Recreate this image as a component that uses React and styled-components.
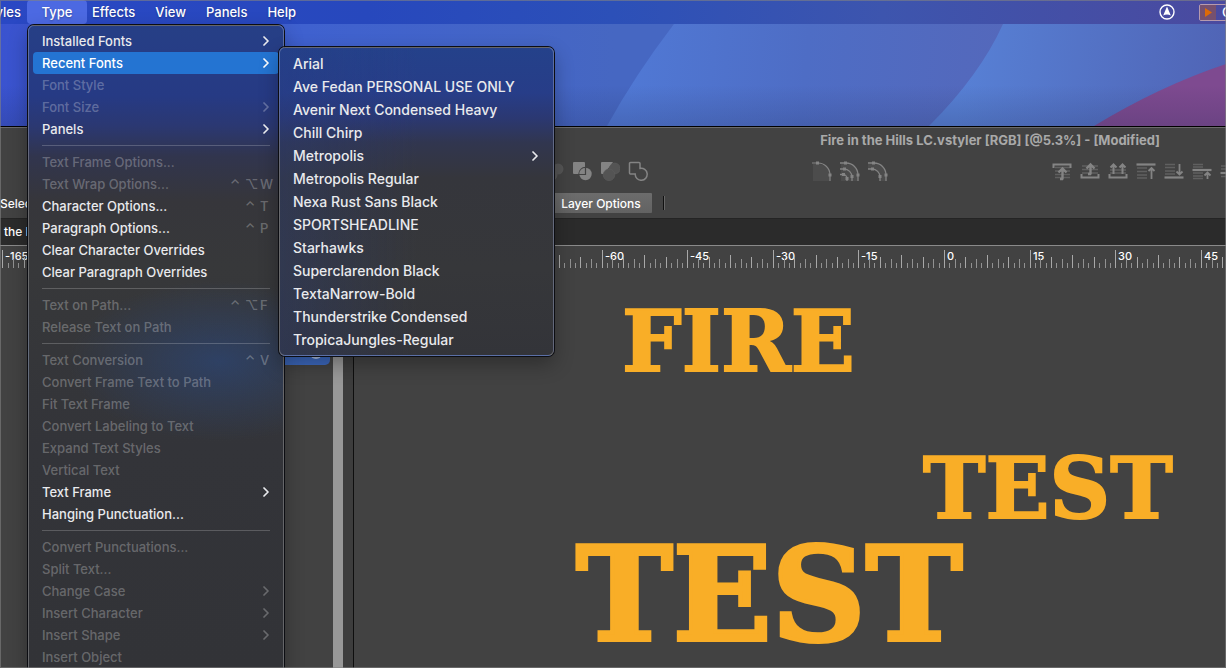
import React from 'react'
import styled, { createGlobalStyle, css } from 'styled-components'

const GlobalStyle = createGlobalStyle`
    * {
        box-sizing: border-box;
    }
    body {
        margin: 0;
        background: #424242;
        font-family: Inter, "Liberation Sans", sans-serif;
        font-size: 13px;
        font-weight: 500;
        color: #fff;
    }
    button {
        font: inherit;
        color: inherit;
        border: 0;
        background: none;
        padding: 0;
        margin: 0;
    }
`

const Page = styled.div`
    position: relative;
    display: flex;
    flex-direction: column;
    min-height: 100vh;
    overflow: hidden;
    &::after {
        content: '';
        position: absolute;
        inset: 0;
        border: 1px solid rgba(130, 130, 130, 0.6);
        pointer-events: none;
        z-index: 10;
    }
`

/* system menu bar */

const MenuBar = styled.nav`
    position: relative;
    z-index: 5;
    display: flex;
    align-items: stretch;
    height: 24px;
    background: linear-gradient(90deg, #2a48c4 0%, #2748bd 30%, #2c50b8 50%, #3d55ae 72%, #4a4a9f 100%);
`

const BarSlot = styled.div`
    position: relative;
    display: flex;
    justify-content: flex-end;
    ${p => p.$cut && css`
        width: 27px;
    `}
`

const BarButton = styled.button`
    padding: 0 10px;
    border-radius: 4px;
    line-height: 22px;
    white-space: nowrap;
    text-shadow: 0 1px 2px rgba(0, 0, 0, 0.3);
    ${p => p.$active && css`
        width: 60px;
        background: #4c69e2;
    `}
    ${p => p.$tight && css`
        padding-left: 5px;
        padding-right: ${p.$cut ? 6 : 10}px;
    `}
`

const StatusArea = styled.div`
    display: flex;
    align-items: center;
    gap: 24px;
    margin-left: auto;
    margin-right: -14px;
`

const RecorderDiv = styled.div`
    display: flex;
    align-items: center;
    gap: 6px;
    width: 41px;
    height: 17px;
    border: 1px solid #b69aae;
    border-radius: 2px;
    overflow: hidden;
    white-space: nowrap;
`

const RecorderPlay = styled.span`
    display: flex;
    align-items: center;
    justify-content: center;
    width: 16px;
    height: 15px;
    background: #75506f;
`

/* drop down menus */

const panel = css`
    position: absolute;
    margin: 0;
    padding: 4px;
    border: 1px solid rgba(255, 255, 255, 0.25);
    border-radius: 6px;
    box-shadow: 0 0 0 1px #0c0d12, 0 8px 20px rgba(0, 0, 0, 0.3);
    list-style: none;
`

const MenuUl = styled.ul`
    ${panel}
    top: 25px;
    left: 1px;
    width: 256px;
    background:
        radial-gradient(ellipse 150px 80px at 190px 335px, rgba(42, 72, 128, 0.6), rgba(42, 72, 128, 0) 100%),
        linear-gradient(180deg, #263f86 0, #263a84 70px, #2b3872 100px, #31354e 130px, #36363b 175px, #37383a 240px, #333439 420px, #323337 640px);
`

const SubMenuUl = styled.ul`
    ${panel}
    top: -5px;
    left: 100%;
    width: 275px;
    background:
        linear-gradient(90deg, rgba(38, 60, 130, 0.3), rgba(38, 60, 130, 0) 50%),
        linear-gradient(180deg, #24418a 0, #273d88 45px, #2b3872 70px, #31364f 95px, #35363c 130px, #36373a 220px, #333439 308px);
`

const ItemLi = styled.li`
    position: relative;
`

const ItemButton = styled.button`
    display: flex;
    align-items: center;
    width: 100%;
    height: ${p => (p.$large ? 23 : 22)}px;
    padding: 0 9px;
    border-radius: 4px;
    font-size: ${p => (p.$large ? 14 : 13)}px;
    text-align: left;
    white-space: nowrap;
    color: #e9eaed;
    &:disabled {
        color: rgba(255, 255, 255, 0.27);
    }
    ${p => p.$active && css`
        background: #2474d2;
        color: #fff;
    `}
`

const Chevron = styled.svg`
    margin-left: auto;
    margin-right: ${p => (p.$large ? 1 : 0)}px;
    fill: none;
    stroke: currentColor;
    stroke-width: 1.7;
    stroke-linecap: round;
    stroke-linejoin: round;
`

const KeysSpan = styled.span`
    display: flex;
    margin-left: auto;
    color: rgba(255, 255, 255, 0.27);
`

const KeySpan = styled.span`
    width: 15px;
    &:last-child {
        width: 10px;
    }
`

const Separator = styled.li`
    height: 11px;
    padding: 5px 9px;
    &::before {
        content: '';
        display: block;
        height: 1px;
        background: rgba(255, 255, 255, 0.2);
    }
`

/* wallpaper and application window */

const Wallpaper = styled.svg`
    display: block;
    width: 100%;
    height: 102px;
`

const AppWindow = styled.main`
    display: flex;
    flex-direction: column;
    flex: 1;
    border-top: 1px solid #000;
    background: #424242;
    box-shadow: inset 0 1px 0 #6b6b6b;
`

const TitleDiv = styled.h1`
    margin: 0;
    padding-right: 66px;
    height: 27px;
    font-size: 13px;
    font-weight: 700;
    line-height: 27px;
    text-align: right;
    color: #a9a9a9;
`

const ToolRow = styled.div`
    display: flex;
    align-items: center;
    height: 34px;
`

const IconGroup = styled.div`
    display: flex;
    gap: 8px;
    margin-left: ${p => p.$left || 0}px;
    ${p => p.$end && css`
        margin-left: auto;
        margin-right: -14px;
    `}
`

const ToolButton = styled.button`
    display: flex;
    width: 20px;
    height: 20px;
`

const OptionRow = styled.div`
    display: flex;
    align-items: center;
    height: 31px;
    border-bottom: 1px solid #242424;
`

const OptionLabel = styled.span`
    width: 550px;
    font-size: 12px;
`

const LayerButton = styled.button`
    width: 102px;
    height: 20px;
    border-radius: 1px;
    background: linear-gradient(180deg, #6c6c6c, #626262);
    font-size: 12px;
`

const Divider = styled.span`
    width: 2px;
    height: 14px;
    margin-left: 11px;
    border-left: 1px solid #111;
    border-right: 1px solid #666;
`

const TabStrip = styled.div`
    height: 27px;
    padding-left: 4px;
    border-bottom: 1px solid #8a8a8a;
    background: #2b2b2b;
    font-size: 12px;
    line-height: 25px;
`

const RulerSvg = styled.svg`
    display: block;
    width: 100%;
    height: 24px;
    font-size: 11px;
`

const Workspace = styled.div`
    display: flex;
    flex: 1;
`

const SidePanel = styled.aside`
    display: flex;
    width: 354px;
    border-right: 1px solid #0e0e0e;
`

const LayerList = styled.div`
    flex: 1;
    padding: 67px 3px 0 32px;
`

const LayerRow = styled.div`
    display: flex;
    justify-content: flex-end;
    align-items: center;
    height: 28px;
    padding-right: 8px;
    border-radius: 5px;
    background: #3c68bd;
`

const LayerDot = styled.span`
    width: 12px;
    height: 15px;
    border-radius: 8px;
    background: #a9bce0;
`

const ScrollTrack = styled.div`
    width: 20px;
    background: #3d3d3d;
`

const ScrollThumb = styled.div`
    width: 10px;
    height: 100%;
    background: #989898;
`

const Canvas = styled.section`
    position: relative;
    flex: 1;
`

const ArtText = styled.div`
    position: absolute;
    left: ${p => p.$x}px;
    top: ${p => p.$y}px;
    font-family: "DejaVu Serif", serif;
    font-size: ${p => p.$size}px;
    font-weight: 700;
    line-height: 1;
    color: #f9ae27;
    -webkit-text-stroke: ${p => (p.$size > 100 ? 4 : 2)}px #f9ae27;
`

const typeItems = [
    { label: 'Installed Fonts', arrow: true },
    { label: 'Recent Fonts', arrow: true, active: true },
    { label: 'Font Style', off: true },
    { label: 'Font Size', off: true, arrow: true },
    { label: 'Panels', arrow: true },
    null,
    { label: 'Text Frame Options...', off: true },
    { label: 'Text Wrap Options...', off: true, keys: '⌃⌥W' },
    { label: 'Character Options...', keys: '⌃T' },
    { label: 'Paragraph Options...', keys: '⌃P' },
    { label: 'Clear Character Overrides' },
    { label: 'Clear Paragraph Overrides' },
    null,
    { label: 'Text on Path...', off: true, keys: '⌃⌥F' },
    { label: 'Release Text on Path', off: true },
    null,
    { label: 'Text Conversion', off: true, keys: '⌃V' },
    { label: 'Convert Frame Text to Path', off: true },
    { label: 'Fit Text Frame', off: true },
    { label: 'Convert Labeling to Text', off: true },
    { label: 'Expand Text Styles', off: true },
    { label: 'Vertical Text', off: true },
    { label: 'Text Frame', arrow: true },
    { label: 'Hanging Punctuation...' },
    null,
    { label: 'Convert Punctuations...', off: true },
    { label: 'Split Text...', off: true },
    { label: 'Change Case', off: true, arrow: true },
    { label: 'Insert Character', off: true, arrow: true },
    { label: 'Insert Shape', off: true, arrow: true },
    { label: 'Insert Object', off: true },
]

const recentFonts = [
    { label: 'Arial' },
    { label: 'Ave Fedan PERSONAL USE ONLY' },
    { label: 'Avenir Next Condensed Heavy' },
    { label: 'Chill Chirp' },
    { label: 'Metropolis', arrow: true },
    { label: 'Metropolis Regular' },
    { label: 'Nexa Rust Sans Black' },
    { label: 'SPORTSHEADLINE' },
    { label: 'Starhawks' },
    { label: 'Superclarendon Black' },
    { label: 'TextaNarrow-Bold' },
    { label: 'Thunderstrike Condensed' },
    { label: 'TropicaJungles-Regular' },
]

const MenuItem = ({ item, large, children }) => (
    <ItemLi>
        <ItemButton $large={large} $active={item.active} disabled={item.off}>
            {item.label}
            {item.keys && <KeysSpan>
                {[...item.keys].map(k => <KeySpan key={k}>{k}</KeySpan>)}
            </KeysSpan>}
            {item.arrow && <Chevron $large={large} width='8' height='10' viewBox='0 0 8 10'>
                <path d='M2 1l4 4-4 4' />
            </Chevron>}
        </ItemButton>
        {children}
    </ItemLi>
)

const TypeMenu = () => (
    <MenuUl>
        {typeItems.map((item, i) => item
            ? <MenuItem key={i} item={item}>
                {item.active && <SubMenuUl>
                    {recentFonts.map(font => <MenuItem key={font.label} item={font} large />)}
                </SubMenuUl>}
            </MenuItem>
            : <Separator key={i} />)}
    </MenuUl>
)

const Icon = ({ label, children }) => (
    <ToolButton aria-label={label}>
        <svg width='20' height='20' viewBox='0 0 20 20' fill='none' stroke='#848484' strokeWidth='1.5'>
            {children}
        </svg>
    </ToolButton>
)

const ShapeIcons = () => (
    <IconGroup $left={544}>
        <Icon label='Exclude'>
            <g stroke='none' fill='#555'>
                <circle cx='14' cy='8' r='5.5' />
                <circle cx='8' cy='14' r='5.5' />
            </g>
        </Icon>
        <Icon label='Intersect'>
            <rect x='1' y='1' width='12' height='12' rx='1' fill='#848484' stroke='none' />
            <circle cx='13.5' cy='13' r='7.2' fill='#424242' stroke='none' />
            <circle cx='13.5' cy='13' r='6.2' fill='#848484' stroke='none' />
            <path d='M13.500 6v7.500H7' stroke='#424242' strokeWidth='1.2' />
        </Icon>
        <Icon label='Subtract'>
            <path d='M1 2a1 1 0 0 1 1-1h11L7 9l-4 4H2a1 1 0 0 1-1-1z' fill='#848484' stroke='none' />
            <g stroke='#5e5e5e' strokeWidth='.6' fill='#545454'>
                <circle cx='14.8' cy='7.5' r='5.4' />
                <circle cx='9' cy='13.8' r='5.8' />
            </g>
        </Icon>
        <Icon label='Unite'>
            <path d='M2.500 1.500h8.500a1 1 0 0 1 1 1v4.900a6 6 0 1 1-4.800 5.600H2.500a1 1 0 0 1-1-1v-9.500a1 1 0 0 1 1-1z' />
        </Icon>
    </IconGroup>
)

const CurveIcons = () => (
    <IconGroup $left={164}>
        <Icon label='Single curve'>
            <path d='M1 3h6a12 12 0 0 1 11 12v5H1z' fill='#4c4c4c' stroke='none' />
            <path d='M0 2h6a12 12 0 0 1 12 12v6' strokeWidth='1.2' />
            <path d='M4 .5h3v3H4zM16.500 12.500h3v3h-3z' fill='#848484' stroke='none' />
        </Icon>
        <Icon label='Triple curve'>
            <path d='M1 3h6a12 12 0 0 1 11 12v5H1z' fill='#4c4c4c' stroke='none' />
            <path d='M0 2h6a12 12 0 0 1 12 12v6M0 8h4a8 8 0 0 1 8 8v4M0 13.500h3a4 4 0 0 1 4 4V20' strokeWidth='1.3' />
            <path d='M4 .5h3v3H4zM16.500 12.500h3v3h-3zM3 6.500h3v3H3zM10.500 14h3v3h-3zM2 12h3v3H2zM5.500 16h3v3h-3z' fill='#848484' stroke='none' />
        </Icon>
        <Icon label='Double curve'>
            <path d='M0 8h4a8 8 0 0 1 8 8v4h6v-5A12 12 0 0 0 6 3H0z' fill='#4c4c4c' stroke='none' />
            <path d='M0 2h6a12 12 0 0 1 12 12v6M0 8h4a8 8 0 0 1 8 8v4' strokeWidth='1.3' />
            <path d='M4 .5h3v3H4zM16.500 12.500h3v3h-3zM3 6.500h3v3H3zM10.500 14h3v3h-3z' fill='#848484' stroke='none' />
        </Icon>
    </IconGroup>
)

const ArrangeIcons = () => (
    <IconGroup $end>
        <Icon label='Bring to front'>
            <path d='M3 6.500h15M3 10h15M3 13.500h15M3 16.500h15' stroke='#606060' />
            <path d='M1.500 7V3.500h17V7' strokeWidth='2' />
            <path d='M10.500 18.500V8M6.500 11.500l4-4 4 4M8 18h3' strokeWidth='2.400' />
        </Icon>
        <Icon label='Bring out'>
            <path d='M2 5h16M2 8.500h16M2 12h16' stroke='#606060' />
            <path d='M1.500 13v3.500h17V13' strokeWidth='2' />
            <path d='M10.500 13.500V4M6.500 7.500l4-4 4 4M8 13h3' strokeWidth='2.400' />
        </Icon>
        <Icon label='Bring all out'>
            <path d='M2 9h16M2 12h16' stroke='#606060' />
            <path d='M1.500 13v3.500h17V13' strokeWidth='2' />
            <path d='M5.500 13V4M2.500 6.500l3-3 3 3M14.500 13V4M11.500 6.500l3-3 3 3' strokeWidth='2' />
        </Icon>
        <Icon label='Move to top'>
            <path d='M1 7h10M1 10.500h10M1 14h10M1 17h10' stroke='#606060' />
            <path d='M.5 3.500h19' strokeWidth='2.200' />
            <path d='M15.500 18V7M12.500 10l3-3 3 3' strokeWidth='1.800' />
        </Icon>
        <Icon label='Move to bottom'>
            <path d='M1 3.500h10M1 6.500h10M1 10h10M1 13h10' stroke='#606060' />
            <path d='M.5 16.500h19' strokeWidth='2.200' />
            <path d='M15.500 3v10M12.500 10.500l3 3 3-3' strokeWidth='1.800' />
        </Icon>
        <Icon label='Move up'>
            <path d='M1 3.500h10M1 6h10M1 12h10M1 15h10M1 17.500h10' stroke='#606060' />
            <path d='M.5 9h19' strokeWidth='2.200' />
            <path d='M15.500 18v-6M12.500 14.500l3-3 3 3' strokeWidth='1.800' />
        </Icon>
        <Icon label='Move down'>
            <path d='M1 5h18M1 8h18M1 15.500h18' stroke='#606060' />
            <path d='M.5 12h19' strokeWidth='2.200' />
        </Icon>
    </IconGroup>
)

const ORIGIN = 944
const MAJOR = 85.6

const tickTop = n => {
    if (n % 16 === 0) return 4
    if (n % 8 === 0) return 9
    if (n % 4 === 0) return 11
    if (n % 2 === 0) return 13
    return 17
}

const Ruler = () => {
    const ticks = []
    for (let n = -176; n < 240; n++) ticks.push(n)
    return <RulerSvg>
        {ticks.map(n => {
            const x = Math.round(ORIGIN + n * MAJOR / 16)
            return <g key={n}>
                <rect x={x} y={tickTop(n)} width='1' height={22 - tickTop(n)} fill={n % 4 === 0 ? '#a8a8a8' : '#929292'} />
                {n % 16 === 0 && <text x={x + 3} y='14' fill='#fff'>{n / 16 * 15}</text>}
            </g>
        })}
    </RulerSvg>
}

const Desktop = () => (
    <Wallpaper viewBox='0 24 1226 102' preserveAspectRatio='none' aria-hidden='true'>
        <defs>
            <linearGradient id='base'>
                <stop offset='0' stopColor='#3a53cf' />
                <stop offset='.25' stopColor='#3f61cf' />
                <stop offset='.5' stopColor='#4667c2' />
            </linearGradient>
            <linearGradient id='mid' x1='607' y1='75' x2='1000' y2='110' gradientUnits='userSpaceOnUse'>
                <stop offset='.06' stopColor='#5078d4' />
                <stop offset='.5' stopColor='#4e6dc5' />
                <stop offset='1' stopColor='#5468bb' />
            </linearGradient>
            <linearGradient id='far' x1='960' y1='75' x2='1226' y2='100' gradientUnits='userSpaceOnUse'>
                <stop offset='0' stopColor='#5780d5' />
                <stop offset='1' stopColor='#5064b5' />
            </linearGradient>
            <linearGradient id='shade' x2='0' y2='1'>
                <stop offset='.6' stopColor='#202850' stopOpacity='0' />
                <stop offset='1' stopColor='#202850' stopOpacity='.2' />
            </linearGradient>
        </defs>
        <rect y='24' width='1226' height='102' fill='url(#base)' />
        <path d='M674 24h552v102H607Q635 75 674 24z' fill='url(#mid)' />
        <path d='M1003 24h223v102H929Q980 75 1003 24z' fill='url(#far)' />
        <path d='M1226 64v62H1094Q1160 86 1226 64z' fill='#7e4a90' />
        <rect y='24' width='1226' height='102' fill='url(#shade)' />
    </Wallpaper>
)

export default function App() {
    return <>
        <GlobalStyle />
        <Page>
            <MenuBar>
                <BarSlot $cut>
                    <BarButton $tight $cut>Styles</BarButton>
                </BarSlot>
                <BarSlot>
                    <BarButton $active>Type</BarButton>
                    <TypeMenu />
                </BarSlot>
                <BarButton $tight>Effects</BarButton>
                <BarButton>View</BarButton>
                <BarButton>Panels</BarButton>
                <BarButton>Help</BarButton>
                <StatusArea>
                    <svg width='16' height='16' viewBox='0 0 16 16' fill='none' stroke='#fff' strokeWidth='1.4'>
                        <circle cx='8' cy='8' r='7' />
                        <path d='M8 2.500l3.800 9q-1.800-1-3.800-1t-3.800 1z' fill='#fff' stroke='none' />
                    </svg>
                    <RecorderDiv>
                        <RecorderPlay>
                            <svg width='7' height='9' viewBox='0 0 7 9'><path d='M0 0l7 4.500L0 9z' fill='#dd6a08' /></svg>
                        </RecorderPlay>
                        C
                    </RecorderDiv>
                </StatusArea>
            </MenuBar>
            <Desktop />
            <AppWindow>
                <TitleDiv>Fire in the Hills LC.vstyler [RGB] [@5.3%] - [Modified]</TitleDiv>
                <ToolRow>
                    <ShapeIcons />
                    <CurveIcons />
                    <ArrangeIcons />
                </ToolRow>
                <OptionRow>
                    <OptionLabel>Select</OptionLabel>
                    <LayerButton>Layer Options</LayerButton>
                    <Divider />
                </OptionRow>
                <TabStrip>the Hills</TabStrip>
                <Ruler />
                <Workspace>
                    <SidePanel>
                        <LayerList>
                            <LayerRow><LayerDot /></LayerRow>
                        </LayerList>
                        <ScrollTrack><ScrollThumb /></ScrollTrack>
                    </SidePanel>
                    <Canvas>
                        <ArtText $x={268} $y={30} $size={84}>FIRE</ArtText>
                        <ArtText $x={569} $y={177} $size={84}>TEST</ArtText>
                        <ArtText $x={222} $y={260} $size={130}>TEST</ArtText>
                    </Canvas>
                </Workspace>
            </AppWindow>
        </Page>
    </>
}
